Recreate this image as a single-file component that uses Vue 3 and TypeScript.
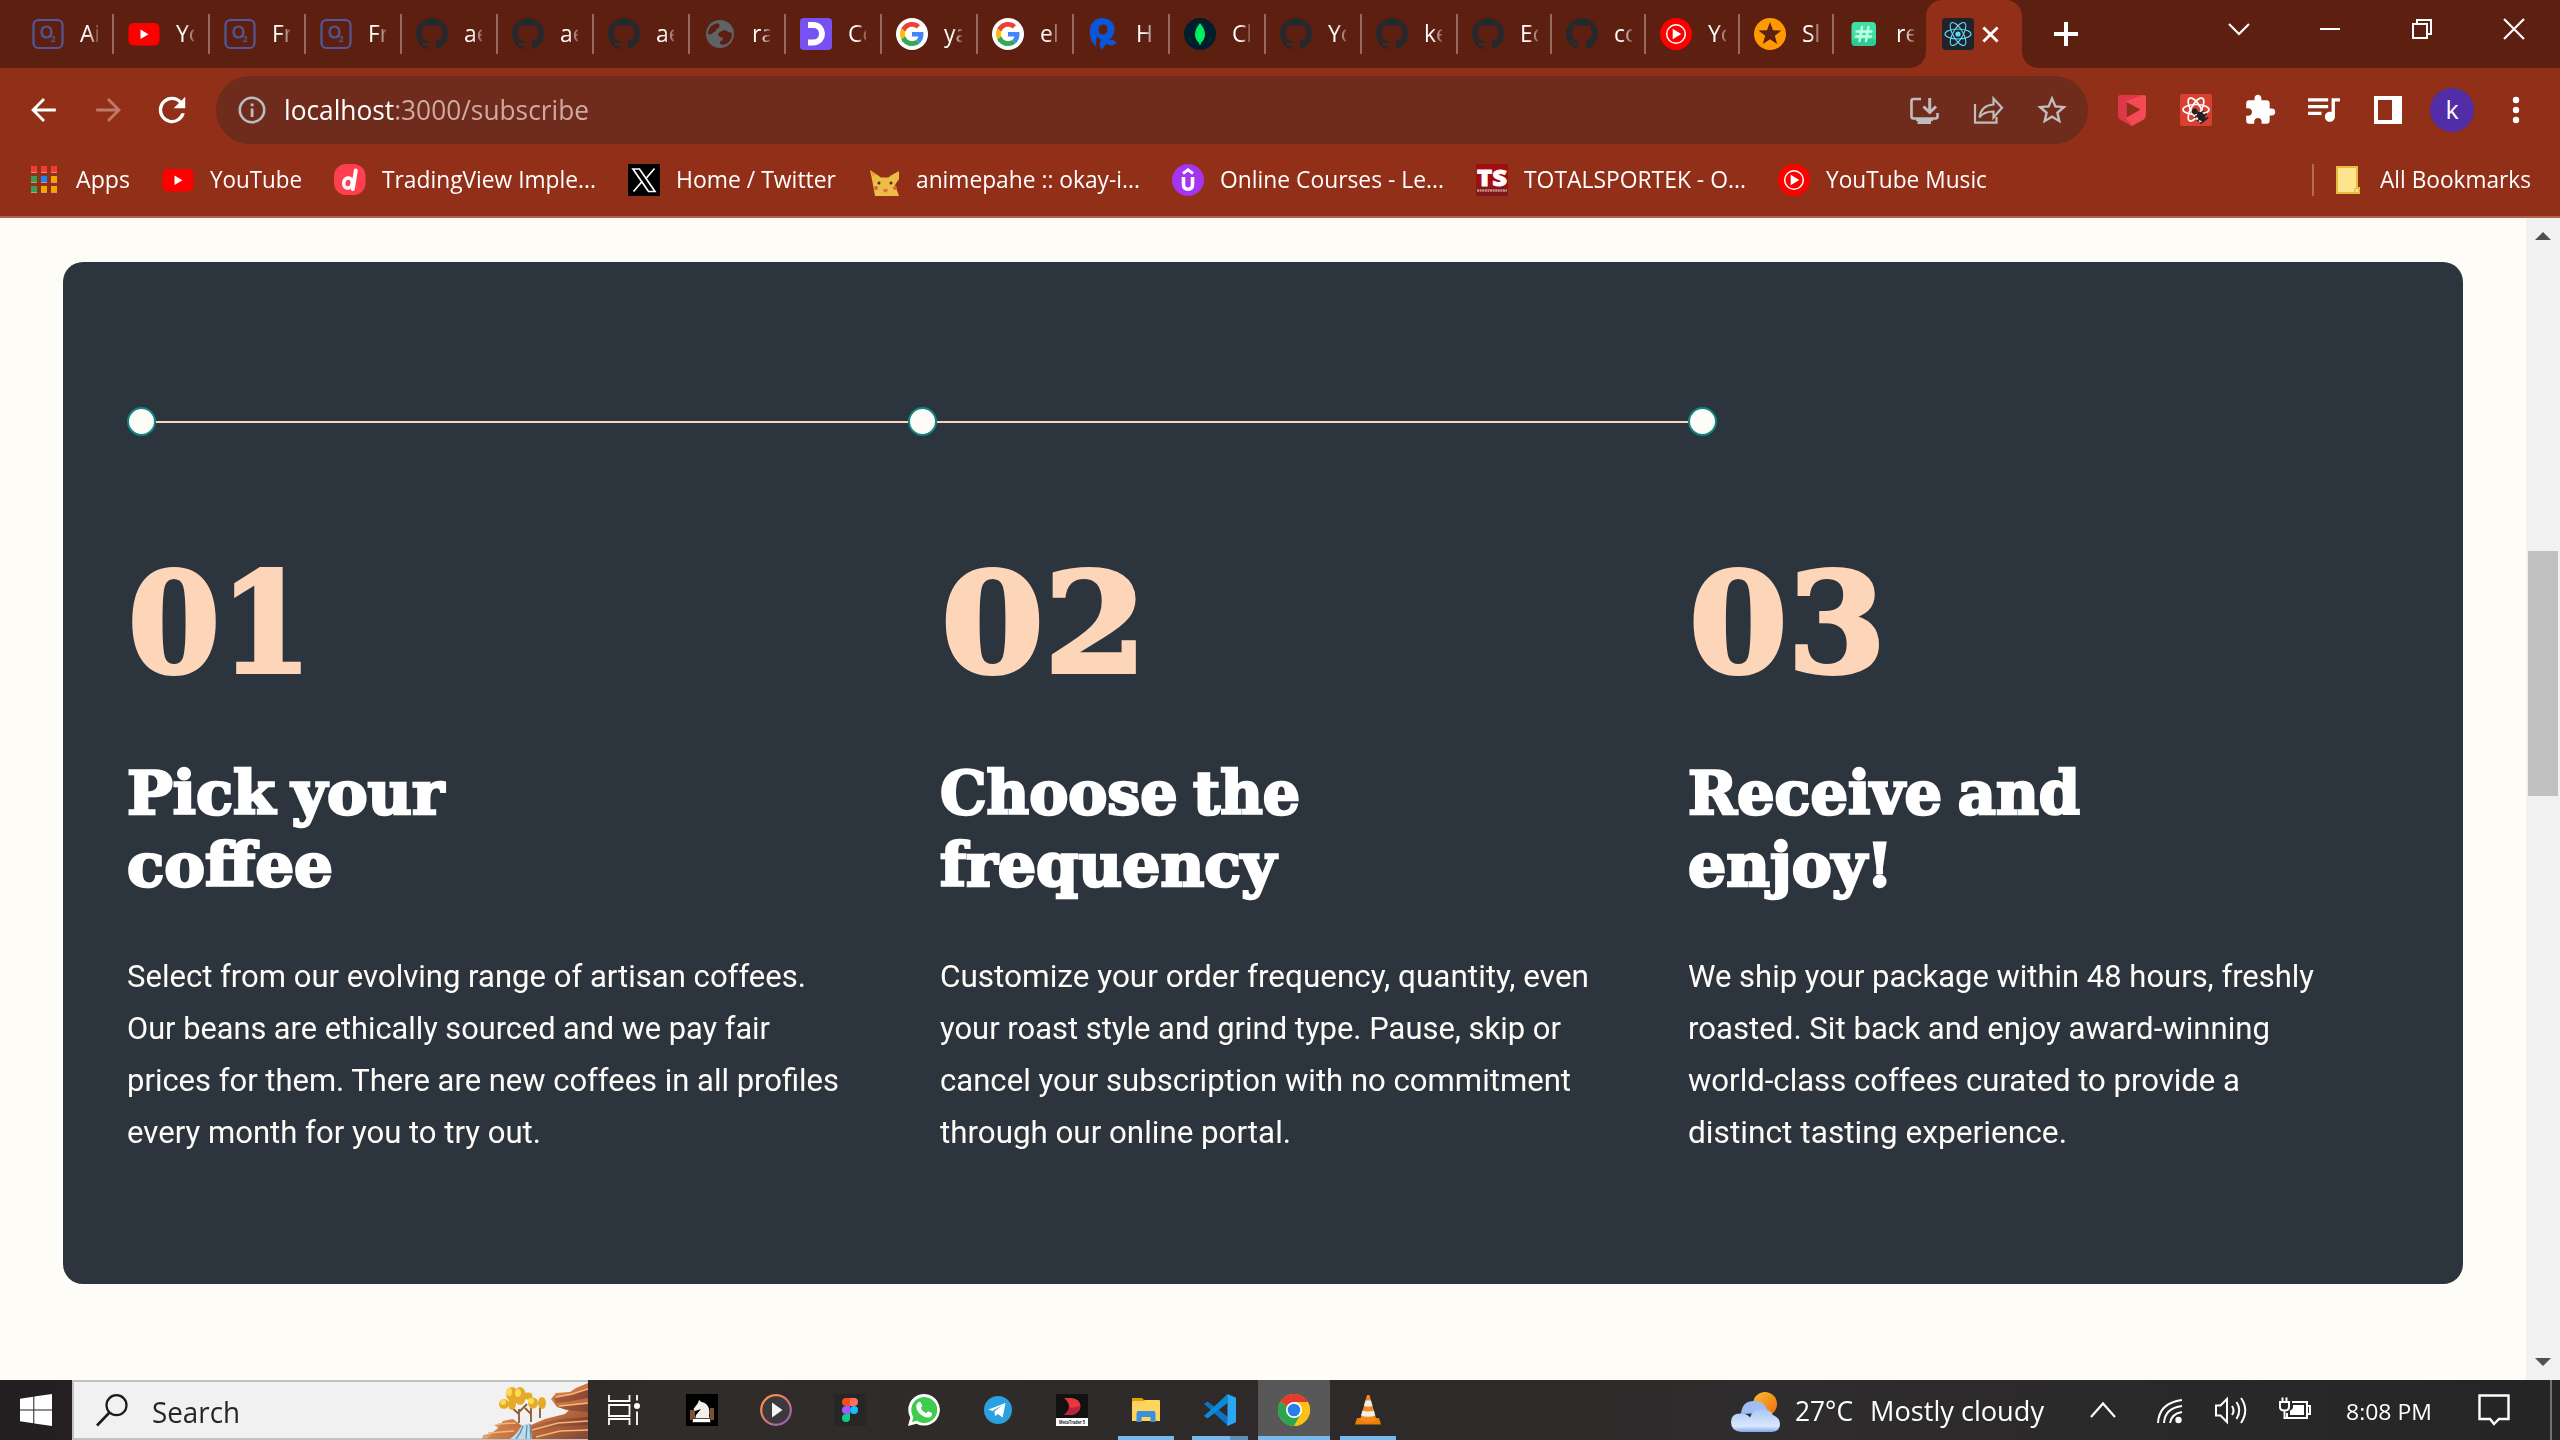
<script setup lang="ts">
import type { Directive } from 'vue'

interface Tab { icon: string; title: string; narrow?: boolean }
interface Bookmark { icon: string; label: string; width: number }
interface Line { text: string; width: number }
interface Step { no: Line; heading: Line[]; body: Line[] }

// Condenses or widens a run of text to the given advance width.
const vFit: Directive<HTMLElement, number> = {
  mounted(el, binding) {
    const natural = el.getBoundingClientRect().width
    el.style.transform = `scaleX(${binding.value / natural})`
    el.style.marginRight = `${binding.value - natural}px`
  },
}

const github = '<path transform="scale(2)" fill="#24292e" d="M8 0C3.58 0 0 3.58 0 8c0 3.54 2.29 6.53 5.47 7.59.4.07.55-.17.55-.38 0-.19-.01-.82-.01-1.49-2.01.37-2.53-.49-2.69-.94-.09-.23-.48-.94-.82-1.13-.28-.15-.68-.52-.01-.53.63-.01 1.08.58 1.23.82.72 1.21 1.87.87 2.33.66.07-.52.28-.87.51-1.07-1.78-.2-3.64-.89-3.64-3.95 0-.87.31-1.59.82-2.15-.08-.2-.36-1.02.08-2.12 0 0 .67-.21 2.2.82.64-.18 1.32-.27 2-.27s1.36.09 2 .27c1.53-1.04 2.2-.82 2.2-.82.44 1.1.16 1.92.08 2.12.51.56.82 1.27.82 2.15 0 3.07-1.87 3.75-3.65 3.95.29.25.54.73.54 1.48 0 1.07-.01 1.93-.01 2.2 0 .21.15.46.55.38A8.01 8.01 0 0 0 16 8c0-4.42-3.58-8-8-8z"/>'
const orbits = (stroke: string, w: number) =>
  `<g fill="none" stroke="${stroke}" stroke-width="${w}"><ellipse cx="16" cy="16" rx="13" ry="5"/><ellipse cx="16" cy="16" rx="13" ry="5" transform="rotate(60 16 16)"/><ellipse cx="16" cy="16" rx="13" ry="5" transform="rotate(120 16 16)"/></g>`

const icons: Record<string, string> = {
  oxygen: '<rect x="1.500" y="2" width="29" height="28" rx="5" fill="none" stroke="#54589a" stroke-width="2.200"/><ellipse cx="14.500" cy="14" rx="5" ry="5.500" fill="none" stroke="#54589a" stroke-width="2.200"/><text x="19" y="23.500" font-size="8" font-weight="700" font-family="Open Sans, sans-serif" fill="#54589a">2</text>',
  youtube: '<rect x="0.500" y="5" width="31" height="22.500" rx="5" fill="#f00"/><path d="M12.500 11.500v9.500l8-4.750z" fill="#fff"/>',
  github,
  globe: '<circle cx="16" cy="16" r="14" fill="#5f6368"/><path d="M11 6c3-2 5 0 4.500 2.500-.5 2-3 1.500-3.500 4-.5 2-3 1-4 3.500l-4 .5C4 11 7 7.500 11 6zM18 13c2-1 5-1 6 1l4 1c.5 6-3 10-7 11.500-3 1-6-.5-5-3 1-1 3-1 3-3s-5-1-5-4c0-2 2-2.500 4-3.500z" fill="#5c1f10"/>',
  code: '<rect width="32" height="32" rx="4" fill="#7950f2"/><path d="M8 7h5c12 0 12 17.500 0 17.500H8" fill="none" stroke="#fff" stroke-width="6"/>',
  google: '<circle cx="16" cy="16" r="16" fill="#fff"/><g transform="translate(4 4)scale(.5)"><path fill="#EA4335" d="M24 9.500c3.540 0 6.710 1.220 9.210 3.600l6.850-6.850C35.900 2.380 30.470 0 24 0 14.620 0 6.510 5.380 2.560 13.220l7.980 6.190C12.430 13.720 17.740 9.500 24 9.500z"/><path fill="#4285F4" d="M46.980 24.550c0-1.570-.15-3.090-.38-4.550H24v9.020h12.940c-.58 2.960-2.260 5.480-4.780 7.180l7.730 6c4.510-4.180 7.090-10.360 7.090-17.650z"/><path fill="#FBBC05" d="M10.530 28.590A14.500 14.500 0 0 1 9.770 24c0-1.600.27-3.140.76-4.590l-7.980-6.190A23.900 23.900 0 0 0 0 24c0 3.880.92 7.540 2.560 10.780l7.970-6.190z"/><path fill="#34A853" d="M24 48c6.480 0 11.930-2.130 15.890-5.810l-7.730-6c-2.150 1.450-4.920 2.300-8.160 2.300-6.260 0-11.570-4.220-13.470-9.910l-7.980 6.190C6.510 42.620 14.620 48 24 48z"/></g>',
  hash: '<path d="M14 0C20 0 26.500 3.500 26.500 11c0 5-2 8.500-6 11 2.500-.5 5.500-.5 8 2-2 4-6.500 4.500-10 1.500L14 31.500C10.500 29 12 24 13 21.500c-2.500-.5-3-2-3-3.500-2 2-2.500 7-1.500 11C3 25 1 17 2 11 3 4 8 0 14 0zm1.500 6.500c-3 0-5 2.500-5 5.500s2 4.500 4.500 4.500 4.500-2 4.500-5-1.500-5-4-5z" fill="#0a56d9"/>',
  mongo: '<circle cx="16" cy="16" r="16" fill="#001e2b"/><path d="M16 5c3 4 5 7 5 11.500 0 4-2 6.500-4.200 8.500L16.500 27h-1l-.3-2C13 23 11 20.500 11 16.500 11 12 13 9 16 5z" fill="#00ed64"/>',
  ytmusic: '<circle cx="16" cy="16" r="16" fill="#f00"/><circle cx="16" cy="16" r="9.300" fill="none" stroke="#fff" stroke-width="1.500"/><path d="M12.700 10.800v10.400l8.600-5.200z" fill="#fff"/>',
  star: '<circle cx="16" cy="16" r="16" fill="#f90"/><path d="M16 4l3 8.300 8.500.3-6.700 5.200 2.400 8.200-7.200-4.800L8.800 26l2.400-8.200-6.700-5.200 8.500-.3z" fill="#5c1f10"/>',
  thread: '<rect x="3.500" y="4" width="24.500" height="24" rx="4" fill="#3fe0a5"/><rect x="3.500" y="21" width="24.500" height="7" rx="3.500" fill="#25bd88" opacity=".6"/><path d="M14 9l-2.500 14M20.500 9L18 23M8.500 13.500h15M8 18.500h15" stroke="#c3ffe7" stroke-width="2.400" stroke-linecap="round"/>',
  react: '<rect width="32" height="32" rx="4" fill="#20232a"/>' + orbits('#61dafb', 1.1) + '<circle cx="16" cy="16" r="2.600" fill="#61dafb"/>',
  back: '<path d="M29.500 16H4.500M16 3.500L3.500 16 16 28.500" fill="none" stroke="#fff" stroke-width="3.200"/>',
  forward: '<path d="M2.500 16h25M16 3.500L28.500 16 16 28.500" fill="none" stroke="#c07a69" stroke-width="3.200"/>',
  reload: '<path transform="translate(16 16)scale(1.65)translate(-12 -12)" fill="#fff" d="M17.650 6.350A7.960 7.960 0 0 0 12 4a8 8 0 1 0 7.730 10h-2.080A6 6 0 1 1 12 6c1.660 0 3.140.69 4.220 1.780L13 11h7V4l-2.350 2.350z"/>',
  info: '<circle cx="16" cy="16" r="12.200" fill="none" stroke="#b9bcc0" stroke-width="2.600"/><path d="M14.700 14.500h2.800V23h-2.800zM14.700 9.500h2.800v2.800h-2.800z" fill="#b9bcc0"/>',
  install: '<path d="M13 5H5.500Q3.500 5 3.500 7v15.500q0 2 2 2h22q2 0 2-2V19" fill="none" stroke="#bdbdbd" stroke-width="2.600"/><path d="M8 24.500h17v2.500h-2v3H9.500v-3H8z" fill="#bdbdbd"/><path d="M21.700 4v14M15.500 12.500l6.200 6 6.300-6" fill="none" stroke="#bdbdbd" stroke-width="3"/>',
  share: '<path d="M3 10v18.700h21.500V23" fill="none" stroke="#bdbdbd" stroke-width="2.200"/><path d="M21.500 4.500v6C13 11 8.500 16 7.500 23.500c3-4.500 7.500-6 14-6v6L30 13.800z" fill="none" stroke="#bdbdbd" stroke-width="2.200"/>',
  bookmark: '<path transform="translate(16 15.500)scale(1.48)translate(-12 -11.500)" fill="#c2bdbc" d="M22 9.240l-7.190-.62L12 2 9.190 8.630 2 9.240l5.460 4.730L5.820 21 12 17.270 18.180 21l-1.630-7.030L22 9.240zM12 15.400l-3.760 2.270 1-4.280-3.320-2.880 4.380-.38L12 6.100l1.710 4.040 4.380.38-3.320 2.880 1 4.280L12 15.400z"/>',
  shield: '<path d="M2 4q0-3 3-3h23q2 0 2 2v18q0 3-3 5l-11 6-11-6q-3-2-3-5z" fill="#f54a56"/><path d="M2 4q0-3 3-3h23L10 7v17l6 8-11-6q-3-2-3-5z" fill="#c9283f" opacity=".55"/><path d="M10.500 8v15.500l14-8z" fill="#922f18"/>',
  bug: '<rect width="32" height="32" rx="2" fill="#d9402f"/><g transform="translate(0 -.5)">' + orbits('#fff', 1.7) + '</g><g transform="rotate(-38 20 21)"><ellipse cx="20" cy="23" rx="3.600" ry="5.500" fill="#222"/><circle cx="18" cy="15" r="3" fill="#222"/><path d="M14 20h12M14 24h12M15 28h10" stroke="#222" stroke-width="1.500"/></g>',
  puzzle: '<path transform="translate(16 16)scale(1.38)translate(-12 -12)" fill="#fff" d="M20.500 11H19V7c0-1.100-.9-2-2-2h-4V3.500C13 2.120 11.880 1 10.500 1S8 2.120 8 3.500V5H4c-1.100 0-1.990.9-1.990 2v3.800H3.500c1.490 0 2.700 1.210 2.700 2.700s-1.210 2.700-2.700 2.700H2V20c0 1.100.9 2 2 2h3.800v-1.500c0-1.490 1.210-2.700 2.700-2.700 1.490 0 2.700 1.210 2.700 2.700V22H17c1.100 0 2-.9 2-2v-4h1.500a2.500 2.500 0 0 0 0-5z"/>',
  queue: '<path transform="translate(16 16)scale(1.68)translate(-12.500 -13)" fill="#fff" d="M15 6H3v2h12V6zm0 4H3v2h12v-2zM3 16h8v-2H3v2zM17 6v8.180c-.31-.11-.65-.18-1-.18-1.660 0-3 1.340-3 3s1.340 3 3 3 3-1.340 3-3V8h3V6h-5z"/>',
  panel: '<path d="M2 2h28v28H2zM6 6v20h14V6z" fill="#fff" fill-rule="evenodd"/>',
  dots: '<circle cx="16" cy="6" r="3.200" fill="#fff"/><circle cx="16" cy="16" r="3.200" fill="#fff"/><circle cx="16" cy="26" r="3.200" fill="#fff"/>',
  apps: '<g><path fill="#f43b30" d="M3 2h6v6H3zM13 2h6v6h-6zM23 2h6v6h-6z"/><path fill="#35a055" d="M3 12h6v6H3zM3 22h6v6H3z"/><path fill="#1a86f5" d="M13 12h6v6h-6z"/><path fill="#f2a600" d="M23 12h6v6h-6zM13 22h6v6h-6zM23 22h6v6h-6z"/><path fill="#c9958a" d="M3 8h6v1H3zM13 8h6v1h-6zM23 8h6v1h-6zM3 18h6v1H3zM13 18h6v1h-6zM23 18h6v1h-6zM3 28h6v1H3zM13 28h6v1h-6zM23 28h6v1h-6z"/></g>',
  dribble: '<rect width="31.500" height="31" rx="12" fill="#ff3f50"/><ellipse cx="14" cy="19" rx="4.300" ry="5" fill="none" stroke="#fff" stroke-width="3.600" transform="rotate(12 14 19)"/><path d="M21.800 6.500l-3 18.500" stroke="#fff" stroke-width="4" stroke-linecap="round"/>',
  x: '<rect width="32" height="32" fill="#000"/><path d="M5 5h6.500L27 27.500h-6.500zM26.500 4.500L18 14.500M5.500 27.500l9-10.500" fill="none" stroke="#fff" stroke-width="1.700"/>',
  pikachu: '<path d="M2 6l9 6q1.500 2 3 1.500h5q2 .5 3-1.500l9-5v8l-4 6 4 11H7L4.500 18z" fill="#ecbe45"/><path d="M2 6l3 6 3.500-1.500z" fill="#e0a030"/><circle cx="11" cy="19" r="1.500" fill="#4a2b1a"/><circle cx="23" cy="19" r="1.500" fill="#4a2b1a"/><circle cx="8" cy="24" r="2" fill="#e0603a"/><circle cx="27" cy="24" r="2" fill="#e0603a"/><path d="M15 25h5q-.5 3.500-2.500 3.500T15 25z" fill="#d9705a"/>',
  udemy: '<circle cx="16" cy="16" r="16" fill="#a435f0"/><path d="M11 9.500l5-3.700 5 3.700" fill="none" stroke="#fff" stroke-width="2.800"/><path d="M11.500 13v7.500q0 4.700 4.500 4.700t4.500-4.700V13" fill="none" stroke="#fff" stroke-width="3.600"/>',
  ts: '<rect width="32" height="32" fill="#a30d10"/><rect y="23" width="32" height="9" fill="#7d1b1a"/><text x="16" y="21.500" font-size="22" font-weight="800" text-anchor="middle" textLength="30" lengthAdjust="spacingAndGlyphs" font-family="Open Sans, sans-serif" fill="#fff" stroke="#fff" stroke-width=".8">TS</text><path d="M1 26.500h30" stroke="#c9908c" stroke-width="2.500" stroke-dasharray="2 .6"/>',
  folder: '<path d="M5 3h20v21h2v5H5z" fill="#ffe48f" stroke="#e6bd3c" stroke-width="2"/><path d="M23 24v5" stroke="#e6bd3c" stroke-width="1.500"/>',
  windows: '<path d="M0 4.700l13.300-1.900V15.500H0zM14.300 2.600L32 0v15.500H14.300zM0 16.500h13.300v12.700L0 27.300zM14.300 16.500H32V32l-17.700-2.600z" fill="#fff"/>',
  magnifier: '<circle cx="20.500" cy="11.200" r="10" fill="none" stroke="#1b1b1b" stroke-width="2.200"/><path d="M13.500 18.500L1 31.500" stroke="#1b1b1b" stroke-width="2.600"/>',
  taskview: '<g fill="none" stroke="#fff" stroke-width="1.800"><path d="M1 1v6h20.500V1M1 31v-6h20.500v6M1 11h20.500v11H1zM29 1v5.500M29 17.500V31"/></g><circle cx="29" cy="12" r="3" fill="#fff"/>',
  knight: '<rect width="32" height="32" fill="#000"/><path d="M4 16h5v10H4zM24 14h4v12h-4z" fill="#7a5330"/><path d="M9 26l1-5 5-6-6 2-1.500-2L12 9l1-3 2.500 2c6 1 9 6 7.500 14l1 4z" fill="#f3f0ea"/><path d="M6.500 24.500h18v4h-18z" fill="#fff" stroke="#222" stroke-width=".8"/>',
  media: '<defs><linearGradient id="mg" x1="0" y1="0" x2="1" y2="1"><stop offset="0" stop-color="#ff9a3d"/><stop offset=".5" stop-color="#e0756e"/><stop offset="1" stop-color="#7a5fd0"/></linearGradient></defs><circle cx="16" cy="16" r="14.800" fill="#3b393b" stroke="url(#mg)" stroke-width="2.200"/><path d="M12 8.500v15L22.500 16z" fill="#f4f4f4"/>',
  figma: '<rect width="32" height="32" fill="#262626"/><path d="M12 4h4v8h-4a4 4 0 0 1 0-8z" fill="#f24e1e"/><path d="M16 4h4a4 4 0 0 1 0 8h-4z" fill="#ff7262"/><path d="M12 12h4v8h-4a4 4 0 0 1 0-8z" fill="#a259ff"/><circle cx="20" cy="16" r="4" fill="#1abcfe"/><path d="M12 20h4v4a4 4 0 1 1-4-4z" fill="#0acf83"/>',
  whatsapp: '<path d="M0 32l2.300-8.400A15.800 15.800 0 1 1 8.500 29.700z" fill="#fff"/><path d="M4 28l1.300-5A13 13 0 1 1 9 26.800z" fill="#3ecb4e"/><path d="M10 8.500c1-1 2.300-1 2.800 0l1.300 3c.3.800-1 2-1.200 2.500 1 2.500 3 4.300 5.400 5.200.7-.3 1.500-2.200 2.500-1.800l3 1.500c.8.500-.2 3.300-1.300 4-3 1.800-8-.5-11-3.500-2.800-3-4.800-8-1.500-10.900z" fill="#fff"/>',
  telegram: '<circle cx="16" cy="16" r="14" fill="#2aa1de"/><path d="M6.500 15.500L23.500 9l-2.800 14.500-5-3.500-2.500 2.300-.8-4.800 8-6.500-10 6z" fill="#fff"/>',
  trader: '<rect width="32" height="32" fill="#111"/><rect y="24" width="32" height="8" fill="#fff"/><path d="M8 4h8q8 1 8.500 8-.5 7-8.500 9H8q5-4 5-8.500T8 4z" fill="#e8383c"/><path d="M13 13q3 2 11.500-1-.5 7-8.500 9H8q5-4 5-8z" fill="#b8233c"/><text x="16" y="30.300" font-size="6" font-weight="700" text-anchor="middle" textLength="26" lengthAdjust="spacingAndGlyphs" font-family="Open Sans, sans-serif" fill="#222">MetaTrader 5</text>',
  explorer: '<path d="M2 4h10l3 3h-13z" fill="#e0a000"/><path d="M2 8q0-1 1-1h10l2-1h14q1 0 1 1v20H2z" fill="#ffd45c"/><path d="M6.500 28V19q0-2 2-2h15q2 0 2 2v9h-5v-5h-9v5z" fill="#3c8fdc"/>',
  vscode: '<path d="M0 10l3.500-2.500L24 23v9L3 12.500z" fill="#0b74c4"/><path d="M23.500 0v9L3.500 24.500 0 22z" fill="#0a8ad8"/><path d="M23.500 0L32 3.800v24.400L23.500 32z" fill="#2aa7f2"/>',
  chrome: '<circle cx="16" cy="16" r="16" fill="#fbc116"/><path d="M16 16L2.100 8A16 16 0 0 1 29.900 8z" fill="#e33b2e"/><path d="M2.100 8A16 16 0 0 0 16 32l7-12z" fill="#2da44e"/><path d="M16 8h13.900A16 16 0 0 1 16 32l7-12z" fill="#fbc116"/><circle cx="16" cy="16" r="8" fill="#fff"/><circle cx="16" cy="16" r="6.300" fill="#2b7de9"/>',
  vlc: '<path d="M5 24h22l2 6.500H3z" fill="#f07d0a"/><path d="M15 1h2.500l7 25q-8 4-16.500 0z" fill="#f58a1c"/><path d="M13.500 6.500h5.400l1.600 5.500q-4.200 1.500-8.600 0zM10.500 16.500q5.500 2 11.300 0l1.500 5q-7 2.500-14.300 0z" fill="#eee"/>',
  wifi: '<g fill="none" stroke="#fff" stroke-width="2"><path d="M5 29q1-20 24-23"/><path d="M11 29q1-15 18-17" /><path d="M17 29q1-9 12-11"/></g><circle cx="25.500" cy="26" r="3.200" fill="#fff"/>',
  speaker: '<g fill="none" stroke="#fff" stroke-width="2"><path d="M1 11.500h4.500L12 5v23l-6.500-6.500H1z"/><path d="M17 12q3 4.500 0 9M21.500 8q5.500 8 0 17M26 4q8.500 12 0 25"/></g>',
  battery: '<g fill="none" stroke="#fff" stroke-width="2"><path d="M13 8h15v16H8v-5M29 12h2v8h-2M1 8h9v5q0 3.500-4.500 3.500T1 13zM3.500 8V3.500M7.500 8V3.500M5.500 16v8h3"/></g><path d="M14 11h11v10H11v-4.500q3-1 3-3z" fill="#fff"/>',
  notice: '<path d="M1.500 1.500h29V25H21l-5 5-4-5H1.500z" fill="none" stroke="#fff" stroke-width="2.400"/>',
  caret: '<path d="M4 23L16 9.500 28 23" fill="none" stroke="#fff" stroke-width="2.200"/>',
}

const tabs: Tab[] = [
  { icon: 'oxygen', title: 'Ai' }, { icon: 'youtube', title: 'Yo' }, { icon: 'oxygen', title: 'Fr' },
  { icon: 'oxygen', title: 'Fr' }, { icon: 'github', title: 'ae' }, { icon: 'github', title: 'ae' },
  { icon: 'github', title: 'ae' }, { icon: 'globe', title: 'ra' }, { icon: 'code', title: 'Co' },
  { icon: 'google', title: 'ya' }, { icon: 'google', title: 'el' }, { icon: 'hash', title: 'H' },
  { icon: 'mongo', title: 'Cl' }, { icon: 'github', title: 'Yo' }, { icon: 'github', title: 'ke' },
  { icon: 'github', title: 'Ec', narrow: true }, { icon: 'github', title: 'co', narrow: true },
  { icon: 'ytmusic', title: 'Yo', narrow: true }, { icon: 'star', title: 'Sl', narrow: true },
  { icon: 'thread', title: 're', narrow: true },
]

const bookmarks: Bookmark[] = [
  { icon: 'apps', label: 'Apps', width: 54 },
  { icon: 'youtube', label: 'YouTube', width: 92 },
  { icon: 'dribble', label: 'TradingView Imple...', width: 214 },
  { icon: 'x', label: 'Home / Twitter', width: 160 },
  { icon: 'pikachu', label: 'animepahe :: okay-i...', width: 224 },
  { icon: 'udemy', label: 'Online Courses - Le...', width: 224 },
  { icon: 'ts', label: 'TOTALSPORTEK - O...', width: 222 },
  { icon: 'ytmusic', label: 'YouTube Music', width: 161 },
]

const steps: Step[] = [
  {
    no: { text: '01', width: 184 },
    heading: [{ text: 'Pick your', width: 317 }, { text: 'coffee', width: 206 }],
    body: [
      { text: 'Select from our evolving range of artisan coffees.', width: 679 },
      { text: 'Our beans are ethically sourced and we pay fair', width: 643 },
      { text: 'prices for them. There are new coffees in all profiles', width: 712 },
      { text: 'every month for you to try out.', width: 414 },
    ],
  },
  {
    no: { text: '02', width: 206 },
    heading: [{ text: 'Choose the', width: 360 }, { text: 'frequency', width: 336 }],
    body: [
      { text: 'Customize your order frequency, quantity, even', width: 649 },
      { text: 'your roast style and grind type. Pause, skip or', width: 621 },
      { text: 'cancel your subscription with no commitment', width: 631 },
      { text: 'through our online portal.', width: 351 },
    ],
  },
  {
    no: { text: '03', width: 197 },
    heading: [{ text: 'Receive and', width: 392 }, { text: 'enjoy!', width: 205 }],
    body: [
      { text: 'We ship your package within 48 hours, freshly', width: 626 },
      { text: 'roasted. Sit back and enjoy award-winning', width: 582 },
      { text: 'world-class coffees curated to provide a', width: 552 },
      { text: 'distinct tasting experience.', width: 379 },
    ],
  },
]

const extensions = ['shield', 'bug', 'puzzle', 'queue', 'panel']
const pinned = [
  { icon: 'knight', state: '' }, { icon: 'media', state: '' }, { icon: 'figma', state: '' },
  { icon: 'whatsapp', state: '' }, { icon: 'telegram', state: '' }, { icon: 'trader', state: '' },
  { icon: 'explorer', state: 'open' }, { icon: 'vscode', state: 'open stacked' },
  { icon: 'chrome', state: 'open active' }, { icon: 'vlc', state: 'open' },
]
</script>

<template>
  <div class="screen">
    <header class="tabstrip">
      <div v-for="(tab, i) in tabs" :key="i" class="tab" :class="{ narrow: tab.narrow, first: i === 0 }">
        <svg class="icon" viewBox="0 0 32 32" v-html="icons[tab.icon]" />
        <span class="tab-title">{{ tab.title }}</span>
      </div>
      <div class="tab-active">
        <svg class="icon" viewBox="0 0 32 32" v-html="icons.react" />
        <svg class="tab-close" viewBox="0 0 18 18"><path d="M1.500 1.500l15 15M16.500 1.500l-15 15" stroke="#fff" stroke-width="3" /></svg>
      </div>
      <svg class="new-tab" viewBox="0 0 24 24"><path d="M12 0v24M0 12h24" stroke="#fff" stroke-width="4" /></svg>
      <div class="window-controls">
        <svg viewBox="0 0 20 20"><path d="M1 5l10 10 10-10" fill="none" stroke="#fff" stroke-width="2.200" /></svg>
        <svg viewBox="0 0 20 20"><path d="M0 10h20" stroke="#fff" stroke-width="2" /></svg>
        <svg viewBox="0 0 20 20"><path d="M1 5h14v14H1zM5 5V1h14v14h-4" fill="none" stroke="#fff" stroke-width="2" /></svg>
        <svg viewBox="0 0 20 20"><path d="M0 0l20 20M20 0L0 20" stroke="#fff" stroke-width="2.200" /></svg>
      </div>
    </header>

    <nav class="toolbar">
      <div class="nav-buttons">
        <svg v-for="n in ['back', 'forward', 'reload']" :key="n" class="icon" :class="{ small: n !== 'reload' }" viewBox="0 0 32 32" v-html="icons[n]" />
      </div>
      <div class="omnibox">
        <svg class="icon" viewBox="0 0 32 32" v-html="icons.info" />
        <span v-fit="305" class="url"><b>localhost</b>:3000/subscribe</span>
        <div class="omni-actions">
          <svg v-for="n in ['install', 'share', 'bookmark']" :key="n" class="icon" viewBox="0 0 32 32" v-html="icons[n]" />
        </div>
      </div>
      <div class="extensions">
        <svg v-for="n in extensions" :key="n" class="icon" viewBox="0 0 32 32" v-html="icons[n]" />
      </div>
      <div class="avatar">k</div>
      <svg class="icon menu" viewBox="0 0 32 32" v-html="icons.dots" />
    </nav>

    <nav class="bookmarks">
      <div v-for="b in bookmarks" :key="b.label" class="bookmark">
        <svg class="icon" viewBox="0 0 32 32" v-html="icons[b.icon]" />
        <span v-fit="b.width" class="label">{{ b.label }}</span>
      </div>
      <div class="bookmark all">
        <svg class="icon" viewBox="0 0 32 32" v-html="icons.folder" />
        <span v-fit="151" class="label">All Bookmarks</span>
      </div>
    </nav>

    <div class="viewport">
      <main class="page">
        <section class="panel">
          <div class="track">
            <i class="dot" /><i class="rail" /><i class="dot" /><i class="rail" /><i class="dot" />
          </div>
          <div class="steps">
            <article v-for="s in steps" :key="s.no.text" class="step">
              <div class="number"><span v-fit="s.no.width" class="fit">{{ s.no.text }}</span></div>
              <h2 class="heading">
                <div v-for="l in s.heading" :key="l.text"><span v-fit="l.width" class="fit">{{ l.text }}</span></div>
              </h2>
              <div class="body">
                <div v-for="l in s.body" :key="l.text"><span v-fit="l.width" class="fit">{{ l.text }}</span></div>
              </div>
            </article>
          </div>
        </section>
      </main>
      <aside class="scrollbar">
        <svg class="arrow" viewBox="0 0 16 8"><path d="M8 0l8 8H0z" fill="#505050" /></svg>
        <div class="thumb" />
        <svg class="arrow" viewBox="0 0 16 8"><path d="M0 0h16L8 8z" fill="#505050" /></svg>
      </aside>
    </div>

    <footer class="taskbar">
      <div class="start"><svg class="icon" viewBox="0 0 32 32" v-html="icons.windows" /></div>
      <div class="search">
        <svg class="icon" viewBox="0 0 32 32" v-html="icons.magnifier" />
        <span v-fit="88" class="search-label">Search</span>
        <svg class="canyon" viewBox="0 0 108 58">
          <defs>
            <linearGradient id="rock" x1="0" y1="0" x2="1" y2="1">
              <stop offset="0" stop-color="#f0a862" /><stop offset=".55" stop-color="#c9713f" /><stop offset="1" stop-color="#6e3a30" />
            </linearGradient>
            <linearGradient id="rock2" x1="0" y1="0" x2="1" y2="0">
              <stop offset="0" stop-color="#d98a50" /><stop offset="1" stop-color="#7a3c32" />
            </linearGradient>
          </defs>
          <path d="M108 2L96 7l-6 4-14 1-5 6 6 8 12 3-4 4-20 5-14 6-10 0-8-6-10 2-6 8-4 3-11 13v4h108z" fill="url(#rock)" />
          <path d="M74 17l18-3 16-6v9l-22 4-10 1zM78 26l30-3v8l-22-2zM50 45l30-7 28-2v8l-30 2-28 6zM14 44l20-4 8 6-22 2zM3 54l20-4 18 2-1 6H2z" fill="url(#rock2)" opacity=".75" />
          <path d="M76 16l16-3 16-5M79 25l29-3M52 49l26-7 30-2M56 56l24-6 28-1M18 43l18-1M8 52l26-2" stroke="#f6b674" stroke-width="1.500" fill="none" />
          <path d="M42 44l8-2 2 16H30q7-5 12-14z" fill="#b9dcef" />
          <path d="M43 45q-2 7-7 13M47 44l-1 14M50 43l1 15" stroke="#5e8aa8" stroke-width="1.200" fill="none" />
          <path d="M39 42V28M39 33l-8-7M39 31l8-8M51 41V27M60 37V26M51 33l-6-6" stroke="#8a5a35" stroke-width="1.800" fill="none" />
          <g fill="#e5ab28"><ellipse cx="32" cy="13" rx="6" ry="7" /><ellipse cx="24" cy="23" rx="5" ry="5" /><ellipse cx="40" cy="15" rx="6" ry="9" /><ellipse cx="48" cy="15" rx="4.500" ry="3.500" /><ellipse cx="53" cy="22" rx="5" ry="5.500" /><ellipse cx="62" cy="22" rx="4" ry="6" /><ellipse cx="32" cy="23" rx="4" ry="6" /></g>
          <g fill="#ffd957"><ellipse cx="29" cy="11" rx="3" ry="4" /><ellipse cx="38" cy="12" rx="3" ry="4" /><ellipse cx="23" cy="21" rx="3" ry="3" /><ellipse cx="51" cy="20" rx="3" ry="3" /></g>
        </svg>
      </div>
      <div class="task-view"><svg class="icon" viewBox="0 0 32 32" v-html="icons.taskview" /></div>
      <div class="pinned">
        <div v-for="p in pinned" :key="p.icon" class="app" :class="p.state">
          <svg class="icon" viewBox="0 0 32 32" v-html="icons[p.icon]" />
        </div>
      </div>
      <div class="tray">
        <svg class="weather" viewBox="0 0 49 40">
          <defs>
            <linearGradient id="sun" x1="0" y1="0" x2="1" y2="1"><stop offset="0" stop-color="#f7c030" /><stop offset="1" stop-color="#ee6a10" /></linearGradient>
            <linearGradient id="cloud" x1="0" y1="0" x2="0" y2="1"><stop offset="0" stop-color="#a9c6f7" /><stop offset=".75" stop-color="#dbe8fc" /><stop offset="1" stop-color="#7ea6ea" /></linearGradient>
          </defs>
          <circle cx="34" cy="12" r="12" fill="url(#sun)" />
          <path d="M10 22q1-13 13-13t14 12z" fill="#9fbdf3" />
          <path d="M10 40Q0 39 0 30t10-8.500q6 0 9 4 3-8.500 12-8.500 8 0 11 6 7 3 7 9 0 7-8 8z" fill="url(#cloud)" />
        </svg>
        <span v-fit="58" class="temp">27°C</span>
        <span v-fit="174" class="sky">Mostly cloudy</span>
        <svg class="icon caret" viewBox="0 0 32 32" v-html="icons.caret" />
        <svg class="icon wifi" viewBox="0 0 32 32" v-html="icons.wifi" />
        <svg class="icon speaker" viewBox="0 0 32 32" v-html="icons.speaker" />
        <svg class="icon battery" viewBox="0 0 32 32" v-html="icons.battery" />
        <span v-fit="86" class="clock">8:08 PM</span>
        <svg class="icon notice" viewBox="0 0 32 32" v-html="icons.notice" />
        <i class="desktop-edge" />
      </div>
    </footer>
  </div>
</template>

<style>
body { margin: 0; overflow: hidden; }
</style>

<style scoped>
.screen {
  width: 2560px;
  height: 1440px;
  display: flex;
  flex-direction: column;
  overflow: hidden;
  background: #fefcf7;
  font-family: "Open Sans", "Noto Sans", sans-serif;
  color: #fff;
}
.icon { width: 32px; height: 32px; flex: none; display: block; overflow: visible; }
.icon.small { width: 28px; height: 28px; padding: 2px; }
.label, .url, .search-label, .temp, .sky, .clock, .fit {
  display: inline-block;
  flex: none;
  white-space: pre;
  transform-origin: 0 50%;
}

/* tab strip */
.tabstrip {
  height: 68px;
  flex: none;
  display: flex;
  align-items: center;
  padding-left: 16px;
  background: #5c1f10;
}
.tab {
  width: 80px;
  height: 40px;
  flex: none;
  display: flex;
  align-items: center;
  padding-left: 14px;
  border-left: 2px solid #956b60;
}
.tab.narrow { width: 78px; }
.tab.first { border-color: transparent; }
.tab-title {
  width: 18px;
  margin: -3px 0 0 16px;
  overflow: hidden;
  font-size: 23px;
  line-height: 32px;
  white-space: pre;
  -webkit-mask-image: linear-gradient(to right, #000 45%, rgba(0, 0, 0, 0.25));
  mask-image: linear-gradient(to right, #000 45%, rgba(0, 0, 0, 0.25));
}
.tab-active {
  position: relative;
  width: 80px;
  height: 68px;
  flex: none;
  display: flex;
  align-items: center;
  padding-left: 16px;
  background: #922f18;
  border-radius: 16px 16px 0 0;
}
.tab-active::before, .tab-active::after {
  content: "";
  position: absolute;
  bottom: 0;
  width: 16px;
  height: 16px;
}
.tab-active::before { left: -16px; background: radial-gradient(circle at 0 0, transparent 15.5px, #922f18 16px); }
.tab-active::after { right: -16px; background: radial-gradient(circle at 100% 0, transparent 15.5px, #922f18 16px); }
.tab-close { width: 17px; height: 17px; margin-left: 8px; }
.new-tab { width: 24px; height: 24px; margin-left: 32px; flex: none; }
.window-controls { display: flex; gap: 72px; margin: -10px 36px 0 auto; }
.window-controls svg { width: 20px; height: 20px; overflow: visible; }

/* toolbar */
.toolbar {
  height: 68px;
  flex: none;
  display: flex;
  align-items: center;
  padding: 8px 28px 0;
  background: #922f18;
}
.nav-buttons { display: flex; gap: 32px; width: 188px; flex: none; }
.omnibox {
  width: 1832px;
  height: 68px;
  flex: none;
  display: flex;
  align-items: center;
  padding: 0 20px;
  border-radius: 34px;
  background: #6f2c1d;
}
.url { margin-left: 16px; font-size: 27px; line-height: 40px; color: #cfaaa1; }
.url b { font-weight: 400; color: #fff; }
.omni-actions { display: flex; gap: 32px; margin-left: auto; }
.extensions { display: flex; gap: 32px; margin-left: 28px; }
.avatar {
  width: 44px;
  height: 44px;
  margin: 0 26px;
  border-radius: 50%;
  background: #512da8;
  font-size: 25px;
  line-height: 42px;
  text-align: center;
}

/* bookmarks bar */
.bookmarks {
  height: 72px;
  flex: none;
  display: flex;
  align-items: center;
  gap: 32px;
  padding: 0 29px 0 28px;
  background: #922f18;
  border-bottom: 2px solid #b0634f;
}
.bookmark { display: flex; align-items: center; gap: 16px; }
.bookmark .label { font-size: 23.500px; line-height: 32px; margin-top: -2px; }
.bookmark.all { margin-left: auto; border-left: 2px solid #b06a58; padding-left: 18px; }

/* page */
.viewport { height: 1162px; flex: none; display: flex; }
.page { flex: 1; padding: 44px 0 0 63px; }
.panel {
  width: 2400px;
  height: 1022px;
  box-sizing: border-box;
  padding: 145px 0 0 64px;
  border-radius: 20px;
  background: #2c343e;
}
.track { display: flex; align-items: center; width: 1590px; height: 29px; }
.dot {
  width: 29px;
  height: 29px;
  box-sizing: border-box;
  flex: none;
  border: 2px solid #0e8784;
  border-radius: 50%;
  background: #fefcf7;
}
.rail { flex: 1; height: 2px; background: #fdd6ba; }
.steps { display: grid; grid-template-columns: 813px 748px 1fr; margin-top: 128px; }
.number {
  height: 120px;
  margin: 0 0 0 1px;
  font: 700 138px/120px "DejaVu Serif", serif;
  color: #fdd6ba;
  -webkit-text-stroke: 4px #fdd6ba;
}
.heading {
  margin: 73px 0 0;
  font: 700 60px/72px "DejaVu Serif", serif;
  word-spacing: -5px;
  -webkit-text-stroke: 2.600px #fff;
}
.heading div { height: 72px; }
.body { margin-top: 49px; font: 400 32px/52px Roboto, sans-serif; color: #fefcf7; }
.body div { height: 52px; }

/* scrollbar */
.scrollbar {
  width: 34px;
  display: flex;
  flex-direction: column;
  align-items: center;
  justify-content: space-between;
  box-sizing: border-box;
  padding: 14px 0;
  background: #f1f1f1;
}
.arrow { width: 16px; height: 8px; }
.thumb { width: 30px; height: 245px; margin-bottom: 251px; background: #c1c1c1; }

/* taskbar */
.taskbar {
  height: 60px;
  flex: none;
  display: flex;
  background: linear-gradient(to right, #231e1f, #302c2a 26%, #2d2a29 50%, #2e2c2c 70%, #262525);
}
.start { width: 72px; display: flex; align-items: center; justify-content: center; }
.search {
  width: 516px;
  box-sizing: border-box;
  display: flex;
  align-items: center;
  padding-left: 22px;
  border: 2px solid #c2c2c2;
  border-right: 0;
  background: #f1f1f1;
  color: #262626;
}
.search-label { margin: 3px 0 0 24px; font-size: 30px; line-height: 40px; }
.canyon { width: 108px; height: 58px; margin-left: auto; }
.task-view { width: 77px; display: flex; align-items: center; padding-left: 20px; box-sizing: border-box; }
.pinned { display: flex; }
.app { position: relative; width: 74px; display: flex; align-items: center; justify-content: center; }
.app.open::after {
  content: "";
  position: absolute;
  left: 9px;
  bottom: 0;
  width: 56px;
  height: 4px;
  background: #76b9ed;
}
.app.active { background: linear-gradient(#585858, #585858) center / 72px 100% no-repeat; }
.app.active::after { left: 1px; width: 72px; }
.app.stacked::after { background: linear-gradient(to right, #76b9ed 38px, #5c90b8 38px); }
.tray { display: flex; align-items: center; margin-left: auto; }
.weather { width: 49px; height: 40px; margin: 4px 15px 0 0; }
.temp, .sky { margin-top: 2px; font-size: 27px; line-height: 40px; }
.sky { margin-left: 17px; }
.caret { margin-left: 43px; }
.wifi { margin-left: 34px; }
.speaker { margin-left: 30px; }
.battery { margin-left: 32px; }
.clock { margin: 2px 0 0 35px; font-size: 22px; line-height: 40px; }
.notice { margin-left: 46px; }
.desktop-edge { width: 2px; height: 60px; margin: 0 8px 0 40px; background: #77716f; }
</style>
